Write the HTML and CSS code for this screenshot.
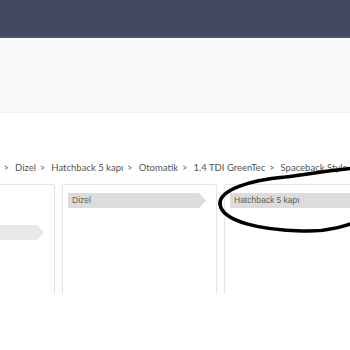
FILE: index.html
```html
<!DOCTYPE html>
<html lang="tr">
<head>
    <meta charset="UTF-8">
    <title>Araç seçimi</title>
    <link rel="stylesheet" href="styles.css">
</head>
<body>
    <!-- Üst menü -->
    <header class="topbar"></header>

    <!-- Araç çubuğu -->
    <div class="toolbar"></div>

    <main class="content">
        <!-- Seçim yolu -->
        <div class="crumbs">
            <span>Benzin/Dizeli</span><span class="sep">&gt;</span>
            <span>Dizel</span><span class="sep">&gt;</span>
            <span>Hatchback 5 kapı</span><span class="sep">&gt;</span>
            <span>Otomatik</span><span class="sep">&gt;</span>
            <span>1.4 TDI GreenTec</span><span class="sep">&gt;</span>
            <span>Spaceback Style</span>
        </div>

        <!-- Seçim sütunları -->
        <div class="columns">
            <div class="column">
                <div class="item"></div>
                <div class="item"></div>
                <div class="item selected faded"></div>
            </div>
            <div class="column">
                <div class="item selected">Dizel</div>
            </div>
            <div class="column">
                <div class="item selected wide">Hatchback 5 kapı</div>
            </div>
        </div>

        <!-- Elle çizilmiş işaret -->
        <svg class="mark" width="350" height="350" viewBox="0 0 350 350">
            <path d="M220 204 C219 190 250 180 285 177 C312 174 340 168 372 167"/>
            <path d="M220 204 C222 222 262 230 302 231 C328 232 348 226 372 216"/>
        </svg>
    </main>
</body>
</html>
```

FILE: styles.css
```css
/* Sayfa */
body {
    margin: 0;
    font-family: Lato, "Open Sans", sans-serif;
    background: #fff;
    overflow: hidden;
}

/* Üst menü */
.topbar {
    height: 36px;
    background: #414961;
    border-bottom: 2px solid #4f556a;
    box-shadow: 0 1px 2px rgba(0,0,0,0.15);
}

/* Araç çubuğu */
.toolbar {
    height: 74px;
    background: #fafafa;
    border-bottom: 1px solid #f0f0f0;
}

.content {
    padding-top: 48px;
}

/* Seçim yolu */
.crumbs {
    white-space: nowrap;
    margin-left: -56px;
    font-size: 9.5px;
    line-height: 14px;
    color: #555;
}

.crumbs .sep {
    margin: 0 4px;
    font-size: 8.5px;
}

/* Sütunlar */
.columns {
    display: flex;
    gap: 7px;
    margin-top: 9px;
    margin-left: -100px;
}

.column {
    flex: none;
    width: 155px;
    height: 110px;
    box-sizing: border-box;
    padding: 8px 10px 0 5px;
    border: 1px solid #e6e6e6;
    border-bottom: none;
    border-radius: 3px 3px 0 0;
    box-shadow: 0 0 2px rgba(0,0,0,0.05);
}

.item {
    height: 15px;
    margin-bottom: 1px;
    padding-left: 4px;
    font-family: "Liberation Sans", Arial, sans-serif;
    font-size: 8.5px;
    line-height: 15px;
    color: #5f5f5f;
}

.item.selected {
    background: #dcdcdc;
    clip-path: polygon(0 0, calc(100% - 7px) 0, 100% 50%, calc(100% - 7px) 100%, 0 100%);
}

.item.faded {
    background: #e8e8e8;
}

.item.wide {
    width: 200px;
}

/* İşaret */
.mark {
    position: absolute;
    left: 0;
    top: 0;
    fill: none;
    stroke: #000;
    stroke-width: 3.5;
    stroke-linecap: round;
}
```
